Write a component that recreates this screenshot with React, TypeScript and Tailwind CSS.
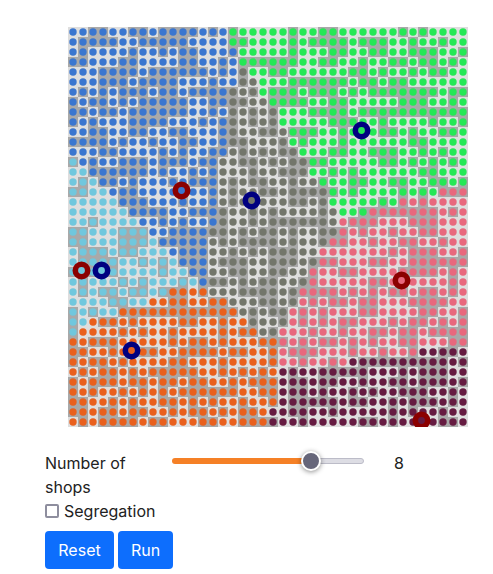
import React from 'react';

const COLORS: Record<string, string> = {
  b: '#3a76cf',
  g: '#24e855',
  k: '#73766b',
  c: '#70c7dd',
  o: '#e9601d',
  p: '#e8687d',
  m: '#661b41',
};

// which shop each cell goes to, as runs per row
const REGIONS = [
  'b16 g24', 'b16 g24', 'b17 g23', 'b17 g23', 'b17 k1 g22', 'b17 k2 g21', 'b16 k3 g21', 'b16 k4 g20',
  'b16 k5 g19', 'b16 k5 g19', 'b16 k6 g18', 'b16 k6 g18', 'b16 k7 g17', 'c1 b14 k9 g16', 'c2 b13 k9 g16',
  'c3 b12 k10 g15', 'c4 b11 k11 g11 p3', 'c5 b10 k11 g7 p7', 'c6 b9 k12 g3 p10', 'c7 b8 k12 p13',
  'c8 b6 k13 p13', 'c9 b5 k12 p14', 'c10 b4 k11 p15', 'c11 b3 k11 p15', 'c12 b2 k10 p16', 'c13 b1 k10 p16',
  'c10 o4 k9 p17', 'c8 o8 k7 p17', 'c5 o12 k5 p18', 'c2 o16 k4 p18', 'c1 o18 k2 p19', 'o21 p19',
  'o21 p14 m5', 'o21 p7 m12', 'o21 m19', 'o21 m19', 'o21 m19', 'o21 m19', 'o20 m20', 'o20 m20',
];

// 1 = light patch, 0 = dark patch
const PATCHES = [
  '1100110010000101011111011001111110101111',
  '1000011000001111001111010000100011011011',
  '1011110110100111011111011100110011000110',
  '0011100111100110100000011001101100100101',
  '1110000100000010101100111111001011010011',
  '1110001000011101101111000000100100111111',
  '1010100010010000010100010001010000000100',
  '0100101000001100001100001100111110001101',
  '0010010000001101010101110000100000000000',
  '0101110000111010010101111100011011110110',
  '1100110011001110011001000110111001011001',
  '0000101101100110001110101110111111001111',
  '1110011110101100101010011100110001101011',
  '0101100010001001100101000011111001010101',
  '1100000010110101110110001101011111100111',
  '1010010111010001010011011011001100110010',
  '0011100111111101011001000001011110101000',
  '1111100011101101010111001011111010101111',
  '1111110000110000110101111011100000000101',
  '1101111110101100110100000011000111000111',
  '0011100011000000101001011000101101100111',
  '0011100010000010100001011000110110011011',
  '1000100111100011010100011111111101000110',
  '1000011010100010001100010001110011000000',
  '0100011110110011001100110110011110000101',
  '1011101011101000101001100111110010111101',
  '1010010010001011100001000001010100100101',
  '1111001111001100111001010100100111000011',
  '0101100000000000010100101011100111100110',
  '0110010111100110110110101010011101001010',
  '0111101011011110100101110110110010010000',
  '0100011111010010111000101001010110011100',
  '0011010001100001001101000111011011011001',
  '0100101111001110111101101101100000000010',
  '1010010100000110101011011000001110100011',
  '0100010010010011010001001001101100100010',
  '0101101010100000011001001011010110001101',
  '0011010110010101101101000001001101000101',
  '0010010011010010100111001101111101011011',
  '1010000100111001100001101111100101111001',
];

const SHOPS = [
  { col: 11, row: 16, color: '#8b0000' },
  { col: 18, row: 17, color: '#000080' },
  { col: 29, row: 10, color: '#000080' },
  { col: 33, row: 25, color: '#8b0000' },
  { col: 35, row: 39, color: '#8b0000' },
  { col: 1, row: 24, color: '#8b0000' },
  { col: 3, row: 24, color: '#000080' },
  { col: 6, row: 32, color: '#000080' },
];

const expandRuns = (runs: string) =>
  runs.split(' ').flatMap(run => Array.from({ length: Number(run.slice(1)) }, () => run[0]));

const CityGrid = () => (
  <svg width={400} height={400} viewBox="0 0 400 400" className="block ml-[23px]">
    {PATCHES.map((patches, row) =>
      patches.split('').map((patch, col) => (
        <rect
          key={`${row}-${col}`}
          x={col * 10}
          y={row * 10}
          width={10}
          height={10}
          fill={patch === '1' ? '#dedede' : '#a9a9a9'}
        />
      ))
    )}
    {REGIONS.map((runs, row) =>
      expandRuns(runs).map((code, col) => (
        <circle key={`${row}-${col}`} cx={col * 10 + 5} cy={row * 10 + 5} r={3.7} fill={COLORS[code]} />
      ))
    )}
    {SHOPS.map(shop => (
      <circle
        key={`${shop.col}-${shop.row}`}
        cx={shop.col * 10 + 3.5}
        cy={shop.row * 10 + 3.5}
        r={6.2}
        fill={COLORS[expandRuns(REGIONS[shop.row])[shop.col]]}
        stroke={shop.color}
        strokeWidth={5.6}
      />
    ))}
  </svg>
);

export default function App() {
  return (
    <div className="px-[45px] pt-[27px] font-['Inter',sans-serif] text-[16px] leading-6 text-[#222222]">
      <CityGrid />

      <div className="flex mt-6 items-start">
        <div className="w-[127px] shrink-0">Number of shops</div>
        <div className="relative w-[192px] h-[6px] mt-[7px] flex rounded-full overflow-visible">
          <div className="w-[139px] bg-[#f58026] rounded-l-full"></div>
          <div className="flex-1 bg-[#dddde4] border border-[#bcbcc8] rounded-r-full"></div>
          <div className="absolute left-[129px] top-[-7px] w-5 h-5 rounded-full bg-[#66667a] border-2 border-white shadow-[0_1px_5px_rgba(0,0,0,0.45)]"></div>
        </div>
        <div className="ml-[30px]">8</div>
      </div>

      <label className="flex items-center gap-[5px]">
        <input type="checkbox" className="appearance-none w-[14px] h-[14px] rounded-[2px] border-2 border-[#8e8e9e] bg-white" />
        Segregation
      </label>

      <div className="flex gap-1 mt-2">
        <button className="w-[69px] h-[38px] bg-[#0d6efd] text-white rounded">Reset</button>
        <button className="w-[55px] h-[38px] bg-[#0d6efd] text-white rounded">Run</button>
      </div>
    </div>
  );
}
